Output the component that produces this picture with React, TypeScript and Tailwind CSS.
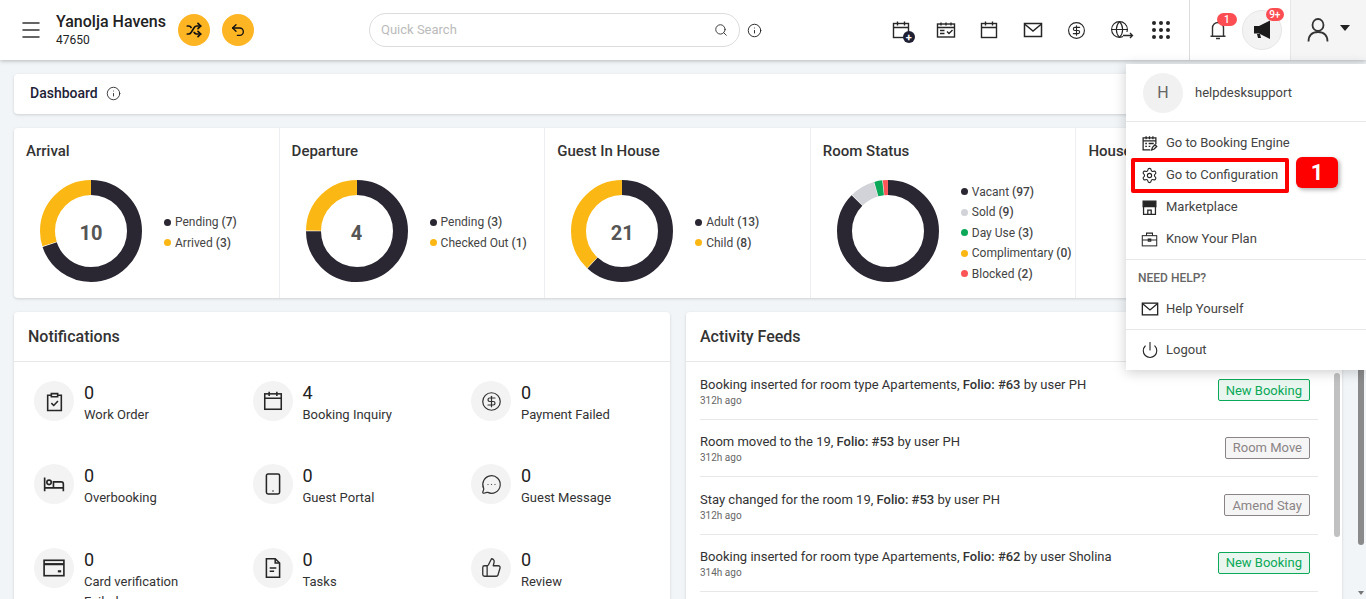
import { Menu, Shuffle, Undo2, Search, Info, CircleDollarSign, Globe, Settings, Power, MessageCircleMore, ThumbsUp } from "lucide-react";

const DARK = "#2a2632";
const YELLOW = "#fbb713";

type Seg = { label: string; value: number; color: string };

const stats: { title: string; total?: string; segs: Seg[] }[] = [
  { title: "Arrival", total: "10", segs: [{ label: "Pending", value: 7, color: DARK }, { label: "Arrived", value: 3, color: YELLOW }] },
  { title: "Departure", total: "4", segs: [{ label: "Pending", value: 3, color: DARK }, { label: "Checked Out", value: 1, color: YELLOW }] },
  { title: "Guest In House", total: "21", segs: [{ label: "Adult", value: 13, color: DARK }, { label: "Child", value: 8, color: YELLOW }] },
  {
    title: "Room Status",
    segs: [
      { label: "Vacant", value: 97, color: DARK },
      { label: "Sold", value: 9, color: "#d1d3d8" },
      { label: "Day Use", value: 3, color: "#0aa858" },
      { label: "Complimentary", value: 0, color: YELLOW },
      { label: "Blocked", value: 2, color: "#fb5558" },
    ],
  },
];

function Donut({ segs, total }: { segs: Seg[]; total?: string }) {
  const r = 43.5;
  const c = 2 * Math.PI * r;
  const sum = segs.reduce((a, s) => a + s.value, 0);
  let acc = 0;
  return (
    <div className="relative h-[102px] w-[102px] shrink-0">
      <svg viewBox="0 0 102 102" className="h-full w-full -rotate-90">
        {segs.map((s) => {
          const len = (s.value / sum) * c;
          const offset = -acc;
          acc += len;
          if (!s.value) return null;
          return (
            <circle key={s.label} cx="51" cy="51" r={r} fill="none" stroke={s.color} strokeWidth="15" strokeDasharray={`${Math.max(len - 0.5, 0)} ${c}`} strokeDashoffset={offset} />
          );
        })}
      </svg>
      {total && (
        <div className="absolute inset-0 flex items-center justify-center pt-1 text-[20px] font-bold text-[#555]">{total}</div>
      )}
    </div>
  );
}

function StatCol({ title, total, segs }: { title: string; total?: string; segs: Seg[] }) {
  return (
    <div className="h-full border-r border-[#eceef1] px-3 pt-[13px]">
      <div className="text-[15px] leading-5 font-medium text-[#333]">{title}</div>
      <div className="mt-[19px] ml-[14px] flex items-center gap-[22px]">
        <Donut segs={segs} total={total} />
        <div className="mt-[3px] flex flex-col gap-[4.5px]">
          {segs.map((s) => (
            <div key={s.label} className="flex items-center gap-1 whitespace-nowrap text-[12px] leading-4 text-[#444]">
              <span className="h-[7px] w-[7px] rounded-full" style={{ background: s.color }} />
              <span>
                {s.label} <b className="font-medium">({s.value})</b>
              </span>
            </div>
          ))}
        </div>
      </div>
    </div>
  );
}

// hand drawn icons, all on a 20 box
function Ico({ size = 20, w = 1.4, children }: { size?: number; w?: number; children: React.ReactNode }) {
  return (
    <svg width={size} height={size} viewBox="0 0 20 20" fill="none" stroke="#262626" strokeWidth={w}>
      {children}
    </svg>
  );
}

const CalIcon = ({ size = 20 }: { size?: number }) => (
  <Ico size={size}>
    <rect x="2.5" y="3.5" width="15" height="14" />
    <path d="M2.5 7.5h15M6.5 1.5v4M13.5 1.5v4" />
  </Ico>
);

const CalCheck = () => (
  <Ico>
    <rect x="1.5" y="4" width="17" height="13" />
    <path d="M1.5 7.5h17M5 2.5v3M10 2.5v3M15 2.5v3M4 10.5h4.5M4 13.5h4.5M11 11.5l2 2 3.5-3.5" />
  </Ico>
);

function CalPlus() {
  return (
    <div className="relative -ml-[2px] h-5 w-5">
      <CalIcon />
      <div className="absolute right-[-4px] bottom-[-3px] flex h-[12px] w-[12px] items-center justify-center rounded-full bg-[#1f2033] text-[11px] leading-none font-bold text-white">+</div>
    </div>
  );
}

const MailIcon = ({ size = 20 }: { size?: number }) => (
  <Ico size={size} w={1.5}>
    <rect x="1.5" y="3.5" width="17" height="13" />
    <path d="M1.5 4l8.5 7 8.5-7" />
  </Ico>
);

function GlobeArrow() {
  return (
    <div className="relative h-5 w-5">
      <Globe size={19} strokeWidth={1.4} color="#262626" />
      <svg width="11" height="7" viewBox="0 0 11 7" fill="none" stroke="#262626" strokeWidth="1.3" className="absolute right-[-4px] bottom-[1px] bg-white">
        <path d="M0 3.5h9M7 1l2.5 2.5L7 6" />
      </svg>
    </div>
  );
}

function Dots() {
  return (
    <div className="grid grid-cols-3 gap-[3px]">
      {Array.from({ length: 9 }).map((_, i) => (
        <span key={i} className="h-[4px] w-[4px] rounded-full bg-[#262626]" />
      ))}
    </div>
  );
}

const BellIcon = () => (
  <svg width="20" height="22" viewBox="0 0 20 22" fill="none" stroke="#333" strokeWidth="1.4">
    <path d="M4.5 17V9a5.5 5.5 0 0 1 11 0v8M2.5 17.2h15M8 19.5h4" />
  </svg>
);

const Megaphone = () => (
  <svg width="18" height="20" viewBox="0 0 18 20" fill="#1a1a1a">
    <path d="M1 6h5l11-5.5V19L6 13.5H1z" />
    <path d="M4 14h3l1 4H5z" />
  </svg>
);

const UserIcon = () => (
  <svg width="22" height="24" viewBox="0 0 22 24" fill="none" stroke="#333" strokeWidth="1.8">
    <ellipse cx="11" cy="7" rx="5.5" ry="6" />
    <path d="M1.5 23.5c0-6 3.5-9.5 9.5-9.5s9.5 3.5 9.5 9.5" />
  </svg>
);

const topIcons = [
  { key: "add", el: <CalPlus /> },
  { key: "check", el: <CalCheck /> },
  { key: "cal", el: <CalIcon /> },
  { key: "mail", el: <MailIcon /> },
  { key: "pay", el: <CircleDollarSign size={19} strokeWidth={1.4} color="#262626" /> },
  { key: "globe", el: <GlobeArrow /> },
];

const notifications = [
  {
    n: "0", label: "Work Order",
    icon: <Ico size={21} w={1.5}><path d="M7 4H3.5v14.5h13V4H13" /><path d="M7 2.5h6v3H7zM7 11.5l2.3 2.3 4-4.3" /></Ico>,
  },
  { n: "4", label: "Booking Inquiry", icon: <CalIcon size={22} /> },
  { n: "0", label: "Payment Failed", icon: <CircleDollarSign size={21} strokeWidth={1.4} /> },
  {
    n: "0", label: "Overbooking",
    icon: <Ico size={22} w={1.5}><path d="M1.5 4v12.5M1.5 13.5h17v3M18.5 13.5V10c0-1-1-2-2-2H9.5v5.5" /><circle cx="5.5" cy="8.5" r="2" /></Ico>,
  },
  {
    n: "0", label: "Guest Portal",
    icon: <Ico size={22} w={1.4}><rect x="4" y="1" width="12" height="18" rx="1.5" /><path d="M9.5 16.3h1" /></Ico>,
  },
  { n: "0", label: "Guest Message", icon: <MessageCircleMore size={21} strokeWidth={1.4} /> },
  {
    n: "0", label: "Card verification Failed",
    icon: <Ico size={22} w={1.5}><rect x="1" y="3" width="18" height="14" /><path d="M1 6.5h18" strokeWidth="2" /><path d="M13.5 13h3" strokeWidth="2" /></Ico>,
  },
  {
    n: "0", label: "Tasks",
    icon: <Ico size={22} w={1.4}><path d="M4 1.5h8l4 4v13H4z" /><path d="M12 1.5v4h4M7 10h6M7 13h4" /></Ico>,
  },
  { n: "0", label: "Review", icon: <ThumbsUp size={21} strokeWidth={1.5} /> },
];

const feeds = [
  { pre: "Booking inserted for room type Apartements, ", folio: "Folio: #63", by: " by user PH", time: "312h ago", tag: "New Booking", green: true },
  { pre: "Room moved to the 19, ", folio: "Folio: #53", by: " by user PH", time: "312h ago", tag: "Room Move" },
  { pre: "Stay changed for the room 19, ", folio: "Folio: #53", by: " by user PH", time: "312h ago", tag: "Amend Stay" },
  { pre: "Booking inserted for room type Apartements, ", folio: "Folio: #62", by: " by user Sholina", time: "314h ago", tag: "New Booking", green: true },
];

const menuTop = [
  {
    label: "Go to Booking Engine",
    icon: <Ico size={17} w={1.5}><path d="M11 17.5H2.5V3.5h15V11" /><path d="M2.5 7h15M6 1.5v3.5M10 1.5v3.5M14 1.5v3.5M5 10h2M9 10h6M5 13.5h2M9 13.5h2M12.5 17.5l1-3 3-3 2 2-3 3z" /></Ico>,
  },
  { label: "Go to Configuration", icon: <Settings size={17} strokeWidth={1.6} color="#262626" /> },
  {
    label: "Marketplace",
    icon: <Ico size={17} w={1.5}><path d="M3 9v9h14V9M8 18v-5h4v5" /><path d="M2.5 2.5h15V9h-15z" fill="#262626" /></Ico>,
  },
  {
    label: "Know Your Plan",
    icon: <Ico size={17} w={1.2}><rect x="1.5" y="5.5" width="17" height="12" /><path d="M6.5 5.5v-3h7v3M1.5 10.5h17M8.5 9.5h3v2.5h-3z" /></Ico>,
  },
];

function MenuRow({ label, icon }: { label: string; icon: React.ReactNode }) {
  return (
    <div className="flex h-8 items-center pl-[15px]">
      <span className="flex w-[25px] shrink-0">{icon}</span>
      <span className="text-[13px] text-[#444]">{label}</span>
    </div>
  );
}

export default function App() {
  return (
    <div className="relative h-[599px] overflow-hidden bg-[#f1f5f8] font-['Roboto',sans-serif]">
      <header className="relative z-10 flex h-[60px] items-center bg-white shadow-[0_1px_4px_rgba(0,0,0,0.25)]">
        <Menu size={24} strokeWidth={1.5} color="#333" className="ml-[19px]" />
        <div className="ml-[13px] w-[122px]">
          <div className="text-[16px] leading-5 font-medium text-[#222]">Yanolja Havens</div>
          <div className="text-[12px] leading-4 text-[#222]">47650</div>
        </div>
        <div className="flex gap-3">
          <span className="flex h-8 w-8 items-center justify-center rounded-full bg-[#fdb524]"><Shuffle size={16} strokeWidth={2.6} color="#111" /></span>
          <span className="flex h-8 w-8 items-center justify-center rounded-full bg-[#fdb524]"><Undo2 size={16} strokeWidth={2} color="#111" /></span>
        </div>
        <div className="ml-[115px] flex h-[34px] w-[371px] items-center justify-between rounded-full border border-[#dcdcdc] pr-[11px] pl-[11px]">
          <span className="text-[13px] text-[#bbb]">Quick Search</span>
          <Search size={14} strokeWidth={1.6} color="#333" />
        </div>
        <Info size={15} strokeWidth={1.5} color="#222" className="ml-[7px]" />
        <div className="ml-[118px] flex items-center">
          {topIcons.map((ic) => (
            <span key={ic.key} className="flex w-[43.7px] justify-center">{ic.el}</span>
          ))}
          <span className="flex w-[37.7px] justify-center"><Dots /></span>
        </div>
        <div className="ml-[9px] flex h-full items-center border-l border-[#dcdcdc] pl-[18px]">
          <div className="relative">
            <BellIcon />
            <span className="absolute top-[-6px] left-[9px] flex h-[13px] w-[20px] items-center justify-center rounded-full bg-[#fb4d52] text-[10px] font-medium text-white">1</span>
          </div>
          <div className="relative ml-[14px] flex h-10 w-10 items-center justify-center rounded-full border border-[#e6e6e6] bg-[#f3f3f3]">
            <Megaphone />
            <span className="absolute top-[-3px] left-[23px] flex h-[13px] w-[18px] items-center justify-center rounded-full bg-[#fb4d52] text-[10px] font-medium text-white">9+</span>
          </div>
        </div>
        <div className="ml-2 flex h-full flex-1 items-center border-l border-[#e6e6e6] bg-[#f5f5f5] pl-4">
          <UserIcon />
          <span className="mt-[-4px] ml-[11px] h-0 w-0 border-x-[5px] border-t-[6px] border-x-transparent border-t-[#222]" />
        </div>
      </header>

      <div className="flex h-[539px]">
        <main className="flex w-[1356px] shrink-0 flex-col gap-[14px] overflow-hidden px-[14px] pt-[14px]">
          <div className="flex h-10 shrink-0 items-center gap-2 rounded-sm bg-white pb-[2px] pl-4 shadow-[0_1px_3px_rgba(0,0,0,0.15)]">
            <span className="text-[14px] font-medium text-[#222236]">Dashboard</span>
            <Info size={15} strokeWidth={1.5} color="#333" />
          </div>

          <div className="grid h-[170px] shrink-0 grid-cols-5 rounded-sm bg-white shadow-[0_1px_3px_rgba(0,0,0,0.15)]">
            {stats.map((s) => (
              <StatCol key={s.title} {...s} />
            ))}
            <div className="px-3 pt-[13px]">
              <div className="text-[15px] leading-5 font-medium text-[#333]">Housekeeping</div>
            </div>
          </div>

          <div className="grid grid-cols-2 gap-4">
            <section className="h-[300px] rounded-sm bg-white shadow-[0_1px_3px_rgba(0,0,0,0.15)]">
              <div className="flex h-[50px] items-center border-b border-[#e8e8e8] pl-[14px] text-[16px] font-medium text-[#333]">Notifications</div>
              <div className="grid grid-cols-[218.5px_218.5px_1fr] gap-y-[43.3px] pt-[19px] pl-5">
                {notifications.map((n) => (
                  <div key={n.label} className="flex h-10 gap-[10px]">
                    <span className="flex h-10 w-10 shrink-0 items-center justify-center rounded-full bg-[#f3f3f3] text-[#333]">{n.icon}</span>
                    <div className="w-[120px]">
                      <div className="mt-[1px] text-[18px] leading-[22px] text-[#222]">{n.n}</div>
                      <div className="mt-[1px] text-[13px] leading-[20px] text-[#333]">{n.label}</div>
                    </div>
                  </div>
                ))}
              </div>
            </section>

            <section className="relative h-[300px] rounded-sm bg-white shadow-[0_1px_3px_rgba(0,0,0,0.15)]">
              <div className="flex h-[50px] items-center border-b border-[#e8e8e8] pl-[14px] text-[16px] font-medium text-[#333]">Activity Feeds</div>
              <div className="mr-6 ml-[14px]">
                {feeds.map((f) => (
                  <div key={f.folio + f.time} className="flex h-[57.5px] items-center justify-between border-b border-[#e8e8e8]">
                    <div className="pt-[3px]">
                      <div className="text-[13px] leading-[18px] text-[#333]">
                        {f.pre}
                        <b className="font-medium">{f.folio}</b>
                        {f.by}
                      </div>
                      <div className="text-[10px] leading-[14px] text-[#666]">{f.time}</div>
                    </div>
                    <span className={`mr-2 flex h-[22px] items-center rounded-[2px] border px-[7px] text-[13px] ${f.green ? "border-[#0aa858] bg-[#e9f6ef] text-[#0aa858]" : "border-[#8a8486] bg-[#f5f5f5] text-[#8a8486]"}`}>{f.tag}</span>
                  </div>
                ))}
              </div>
              <span className="absolute top-[61px] right-[2px] h-[164px] w-[6px] rounded-full bg-[#c1c1c1]" />
            </section>
          </div>
        </main>
        <div className="flex flex-1 flex-col items-start pt-[310px] pl-[2px]">
          <div className="h-[175px] w-[6px] rounded-b-full bg-[#8a8a8a]" />
          <span className="mt-[46px] h-0 w-0 border-x-[3px] border-t-[4px] border-x-transparent border-t-[#777]" />
        </div>
      </div>

      <div className="absolute top-[64px] right-0 z-20 h-[306px] w-[240px] bg-white shadow-[0_2px_12px_rgba(0,0,0,0.2)]">
        <div className="flex h-[58px] items-center gap-3 border-b border-[#e8e8e8] pl-[17px]">
          <span className="flex h-10 w-10 items-center justify-center rounded-full bg-[#f1f1f1] text-[16px] text-[#666]">H</span>
          <span className="text-[13px] text-[#444]">helpdesksupport</span>
        </div>
        <div className="border-b border-[#e8e8e8] pt-[5px] pb-1">
          {menuTop.map((m) => (
            <MenuRow key={m.label} {...m} />
          ))}
        </div>
        <div className="border-b border-[#e8e8e8]">
          <div className="pt-[10px] pl-3 text-[12px] leading-4 font-medium text-[#666]">NEED HELP?</div>
          <div className="pt-[7px] pb-1">
            <MenuRow label="Help Yourself" icon={<MailIcon size={18} />} />
          </div>
        </div>
        <div className="pt-1">
          <MenuRow label="Logout" icon={<Power size={18} strokeWidth={1.5} color="#262626" />} />
        </div>
        <div className="absolute top-[94px] left-[5px] h-[35px] w-[158px] rounded-[2px] border-4 border-[#f00]" />
        <div className="absolute top-[93px] left-[170px] flex h-[31px] w-[42px] items-center justify-center rounded-md bg-[#f00] text-[22px] font-bold text-white shadow-[2px_2px_4px_rgba(0,0,0,0.3)]">1</div>
      </div>
    </div>
  );
}
